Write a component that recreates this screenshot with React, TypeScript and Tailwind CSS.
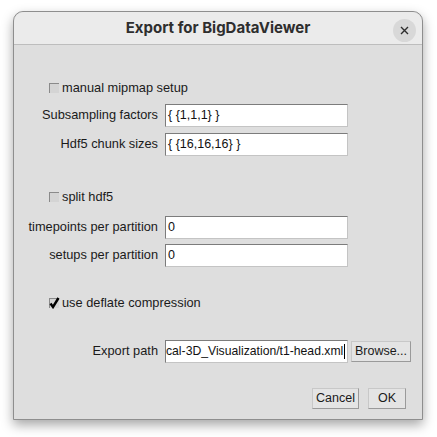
import React from "react";

const font = { fontFamily: '"Liberation Sans", Arial, sans-serif' };

function CheckBox({ checked, label }: { checked?: boolean; label: string }) {
  return (
    <div className="flex h-[16px] items-center pl-[35px]">
      <div className="relative h-[10px] w-[10px] border-l border-t border-[#8a8a8a] border-b-[#f2f2f2] border-r-[#f2f2f2] bg-[#d4d4d4]">
        {checked && (
          <svg className="absolute left-[-1px] top-[-2px]" width="11" height="12" viewBox="0 0 11 12">
            <path d="M1.5 6.5 L4 10 L9.5 1" fill="none" stroke="#000" strokeWidth="2.4" />
          </svg>
        )}
      </div>
      <span className="ml-[3px] text-[12.8px] leading-none text-[#1a1a1a]">{label}</span>
    </div>
  );
}

function Field({ label, value, mt }: { label: string; value: string; mt: string }) {
  return (
    <div className={`flex items-center ${mt}`}>
      <div className="w-[144px] whitespace-nowrap text-right text-[12.8px] leading-none text-[#1a1a1a]">{label}</div>
      <div className="ml-[7px] flex h-[23px] w-[183px] items-center border border-[#c4c4c4] border-l-[#7c7c7c] border-t-[#7c7c7c] bg-white pl-[2px] text-[12.5px] text-[#111]">
        {value}
      </div>
    </div>
  );
}

function Btn({ children, w }: { children: React.ReactNode; w: string }) {
  return (
    <div className={`flex h-[21px] ${w} items-center justify-center border border-[#9a9a9a] border-l-[#c8c8c8] border-t-[#c8c8c8] bg-[#e4e4e4] text-[12.5px] text-[#1a1a1a]`}>
      {children}
    </div>
  );
}

export default function App() {
  return (
    <div className="h-[437px] w-[437px] bg-white pl-[13px] pt-[11px]" style={font}>
      <div className="flex h-[409px] w-[410px] flex-col rounded-t-[10px] border border-[#8e8e8e] bg-[#dedede] shadow-[0_5px_12px_rgba(0,0,0,0.35)]">
        <div className="relative flex h-[33px] items-center justify-center rounded-t-[10px] border-b border-[#bdbdbd] bg-[#ebebeb]">
          <span className="text-[15px] font-bold text-[#2e2e2e]" style={{ fontFamily: "Inter, sans-serif" }}>
            Export for BigDataViewer
          </span>
          <div className="absolute right-[6px] top-[7px] flex h-[23px] w-[23px] items-center justify-center rounded-full bg-[#d8d8d8]">
            <svg width="9" height="9" viewBox="0 0 9 9">
              <path d="M1 1 L8 8 M8 1 L1 8" stroke="#2e2e2e" strokeWidth="1.4" />
            </svg>
          </div>
        </div>
        <div className="flex flex-1 flex-col">
          <div className="mt-[35px]">
            <CheckBox label="manual mipmap setup" />
          </div>
          <Field mt="mt-[8px]" label="Subsampling factors" value="{ {1,1,1} }" />
          <Field mt="mt-[6px]" label="Hdf5 chunk sizes" value="{ {16,16,16} }" />
          <div className="mt-[33px]">
            <CheckBox label="split hdf5" />
          </div>
          <Field mt="mt-[11px]" label="timepoints per partition" value="0" />
          <Field mt="mt-[5px]" label="setups per partition" value="0" />
          <div className="mt-[28px]">
            <CheckBox checked label="use deflate compression" />
          </div>
          <div className="mt-[29px] flex items-center">
            <div className="w-[144px] text-right text-[12.8px] leading-none text-[#1a1a1a]">Export path</div>
            <div className="ml-[7px] flex h-[23px] w-[183px] items-center justify-end overflow-hidden whitespace-nowrap border border-[#c4c4c4] border-l-[#7c7c7c] border-t-[#7c7c7c] bg-white pr-[2px] text-[12.2px] text-[#111]">
              <span>cal-3D_Visualization/t1-head.xml</span>
              <span className="ml-[1px] h-[15px] w-[1px] bg-black" />
            </div>
            <div className="ml-[3px]">
              <Btn w="w-[60px]">Browse...</Btn>
            </div>
          </div>
          <div className="mt-[25px] flex justify-end gap-[9px] pr-[16px]">
            <Btn w="w-[47px]">Cancel</Btn>
            <Btn w="w-[38px]">OK</Btn>
          </div>
        </div>
      </div>
    </div>
  );
}
